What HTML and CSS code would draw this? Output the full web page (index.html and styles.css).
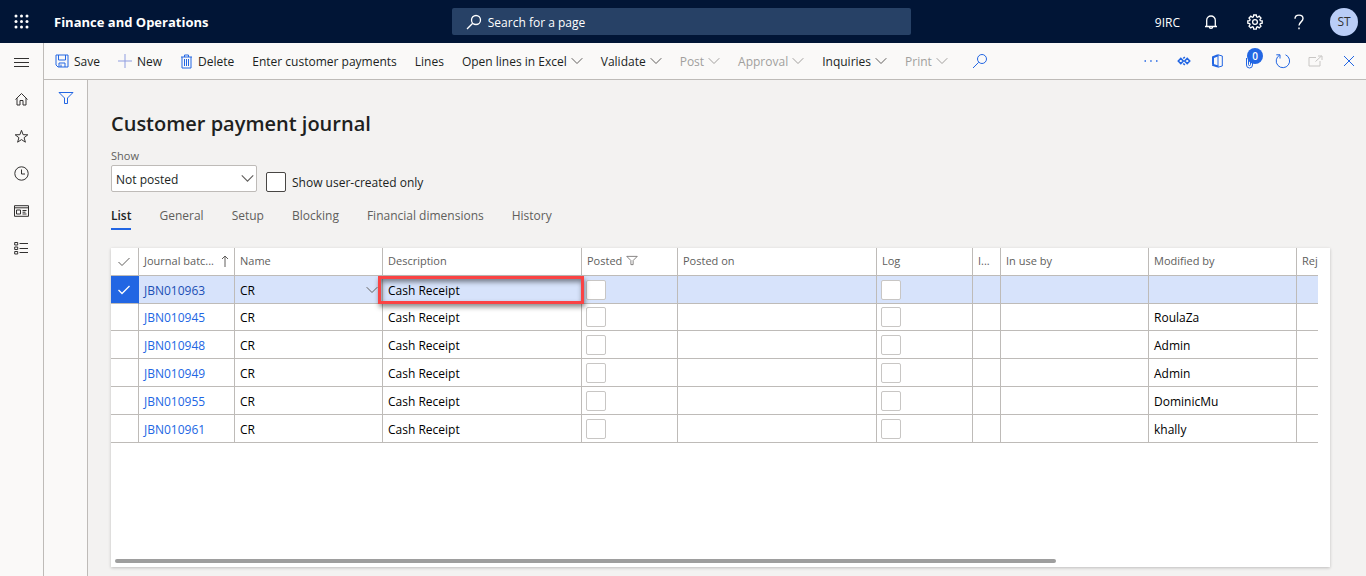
FILE: index.html
```html
<!DOCTYPE html>
<html lang="en">
<head>
<meta charset="utf-8">
<title>Customer payment journal</title>
<link rel="stylesheet" href="styles.css">
</head>
<body>
<svg class="sprite" aria-hidden="true">
  <symbol id="chevron" viewBox="0 0 12 8"><path d="M.7 1.200 6 6.500l5.300-5.300"/></symbol>
  <symbol id="search" viewBox="0 0 16 16"><circle cx="10" cy="6" r="4.500"/><path d="M6.700 9.300 1 15"/></symbol>
  <symbol id="check" viewBox="0 0 14 10"><path d="M1.500 5 5 8.500 12.500 1"/></symbol>
  <symbol id="funnel" viewBox="0 0 16 14"><path d="M1 1.500h14L9.500 7v5.500h-3V7z"/></symbol>
</svg>

<header class="top">
  <div class="brand">
    <button class="icon-btn waffle" aria-label="App launcher">
      <svg width="15" height="15" viewBox="0 0 15 15" fill="#fff" stroke="none"><g class="dots"><circle cx="2" cy="2" r="1.500"/><circle cx="7.500" cy="2" r="1.500"/><circle cx="13" cy="2" r="1.500"/><circle cx="2" cy="7.500" r="1.500"/><circle cx="7.500" cy="7.500" r="1.500"/><circle cx="13" cy="7.500" r="1.500"/><circle cx="2" cy="13" r="1.500"/><circle cx="7.500" cy="13" r="1.500"/><circle cx="13" cy="13" r="1.500"/></g></svg>
    </button>
    <span class="product">Finance and Operations</span>
  </div>
  <label class="search">
    <svg width="16" height="16" stroke-width="1.300"><use href="#search"/></svg>
    <input type="text" placeholder="Search for a page" aria-label="Search for a page">
  </label>
  <div class="account">
    <span class="company">9IRC</span>
    <button class="icon-btn" aria-label="Notifications">
      <svg width="14" height="16" viewBox="0 0 14 16" stroke-width="1.300"><path d="M1 12.500h12M2.700 12.500V6.300a4.300 4.300 0 0 1 8.600 0v6.200M5.300 12.700a1.700 1.700 0 0 0 3.400 0"/></svg>
    </button>
    <button class="icon-btn" aria-label="Settings">
      <svg width="16" height="16" viewBox="0 0 16 16" stroke-width="1.300"><path d="M6.700 1h2.600l.3 1.900 1 .4 1.600-1.100 1.800 1.800-1.100 1.600.4 1 1.900.3v2.300l-1.900.3-.4 1 1.100 1.600-1.800 1.800-1.600-1.100-1 .4-.3 1.900H6.700l-.3-1.900-1-.4-1.600 1.100L2 12.100l1.100-1.600-.4-1L.8 9.200V6.900l1.900-.3.4-1L2 4l1.800-1.800 1.600 1.100 1-.4z"/><circle cx="8" cy="8" r="2.400"/></svg>
    </button>
    <button class="icon-btn" aria-label="Help">
      <svg width="12" height="16" viewBox="0 0 12 16" stroke-width="1.400"><path d="M2 4.800C2 2.500 3.700 1.100 6 1.100s4 1.400 4 3.500c0 3.200-4 3.400-4 7M6 13.600v1.600"/></svg>
    </button>
    <button class="avatar" aria-label="Account manager">ST</button>
  </div>
</header>

<div class="shell">
  <nav class="rail" aria-label="Navigation">
    <button class="icon-btn" aria-label="Expand navigation"><svg width="15" height="12" viewBox="0 0 15 12"><path d="M0 1.500h15M0 5.500h15M0 9.500h15"/></svg></button>
    <button class="icon-btn" aria-label="Home"><svg width="15" height="15" viewBox="0 0 15 15"><path d="M1.500 7.500 7.500 1.500l6 6M3 6.200v6.800h3V8.500h3v4.500h3V6.200"/></svg></button>
    <button class="icon-btn" aria-label="Favorites"><svg width="15" height="15" viewBox="0 0 15 15"><path d="M7.500 1.300 9.100 5.700l4.700.1-3.700 2.900 1.300 4.500-3.900-2.600-3.900 2.600 1.300-4.500L1.200 5.800l4.700-.1z"/></svg></button>
    <button class="icon-btn" aria-label="Recent"><svg width="15" height="15" viewBox="0 0 15 15"><circle cx="7.500" cy="7.500" r="6.700"/><path d="M7.500 3.500v4.500H11"/></svg></button>
    <button class="icon-btn" aria-label="Workspaces"><svg width="15" height="12" viewBox="0 0 15 12"><path d="M.5.700h14v10.600H.5zM.5 2.800h14M2.500 5h4v4h-4zM8.500 5.500h4M8.500 7.200h3M8.500 9h4"/></svg></button>
    <button class="icon-btn" aria-label="Modules"><svg width="15" height="14" viewBox="0 0 15 14"><path d="M.7 1.500h3v2.500h-3zM.7 6h3v2.500h-3zM.7 10.500h3v2.500h-3zM5.500 2.500H14M5.500 7.500H14M5.500 11.500H14"/></svg></button>
  </nav>

  <div class="work">
    <div class="toolbar" role="toolbar">
      <button class="cmd with-icon"><svg width="14" height="14" viewBox="0 0 14 14"><path d="M1 1h12v12H3L1 11zM3.500 1v5h7V1M4 13V9h6v4M6 10.500V13"/></svg>Save</button>
      <button class="cmd with-icon"><svg class="pale" width="14" height="14" viewBox="0 0 14 14"><path d="M7 0v14M0 7h14"/></svg>New</button>
      <button class="cmd with-icon"><svg width="13" height="15" viewBox="0 0 13 15"><path d="M1 3h11M4.500 3V1h4v2M2 3v11h9V3M4.500 5v7M6.500 5v7M8.500 5v7"/></svg>Delete</button>
      <button class="cmd">Enter customer payments</button>
      <button class="cmd">Lines</button>
      <button class="cmd">Open lines in Excel<svg class="chev" width="12" height="8"><use href="#chevron"/></svg></button>
      <button class="cmd">Validate<svg class="chev" width="12" height="8"><use href="#chevron"/></svg></button>
      <button class="cmd" disabled>Post<svg class="chev" width="12" height="8"><use href="#chevron"/></svg></button>
      <button class="cmd" disabled>Approval<svg class="chev" width="12" height="8"><use href="#chevron"/></svg></button>
      <button class="cmd">Inquiries<svg class="chev" width="12" height="8"><use href="#chevron"/></svg></button>
      <button class="cmd" disabled>Print<svg class="chev" width="12" height="8"><use href="#chevron"/></svg></button>
      <button class="cmd find" aria-label="Search actions"><svg width="16" height="16"><use href="#search"/></svg></button>
      <div class="tools">
        <button class="icon-btn" aria-label="More"><svg width="14" height="4" viewBox="0 0 14 4"><path d="M.5 2H2M6.200 2h1.500M12 2h1.500" stroke-width="1.500"/></svg></button>
        <button class="icon-btn" aria-label="Power Apps"><svg width="14" height="10" viewBox="0 0 14 10" stroke-width="1.600"><path d="M1.300 5 3.800 2.500 6.300 5 3.800 7.500zM6.300 2.500 7.800 1M6.300 7.500 7.800 9M7.700 5l2.500-2.500L12.700 5l-2.500 2.500z"/></svg></button>
        <button class="icon-btn" aria-label="Open in Microsoft Office"><svg width="12" height="14" viewBox="0 0 12 14"><path d="M7 .8 11.300 2v10L7 13.200z"/><path d="M7 1.300 2 3.300v7.200M1.300 10.700 7 12.500" stroke-width="2"/></svg></button>
        <button class="icon-btn clip" aria-label="Attachments"><svg width="10" height="15" viewBox="0 0 10 15"><path d="M1.500 4v7a3 3 0 0 0 6 0V3a2 2 0 0 0-4 0v7.500a1 1 0 0 0 2 0V4"/></svg><span class="badge">0</span></button>
        <button class="icon-btn" aria-label="Refresh"><svg width="16" height="16" viewBox="0 0 16 16"><path d="M10.500 1.800a6.700 6.700 0 1 1-5.800.3M5 5.500V1.800H1.300"/></svg></button>
        <button class="icon-btn" aria-label="Open in new window" disabled><svg width="15" height="12" viewBox="0 0 15 12"><path d="M8 2.500H1v8.500h11V6M7.500 6.500l6-5.500M10 1h4v4"/></svg></button>
        <button class="icon-btn" aria-label="Close"><svg width="12" height="12" viewBox="0 0 12 12"><path d="m1 1 10 10M11 1 1 11"/></svg></button>
      </div>
    </div>

    <div class="panes">
      <aside class="filter-pane">
        <button class="icon-btn" aria-label="Show filters"><svg width="16" height="14"><use href="#funnel"/></svg></button>
      </aside>

      <main class="page">
        <h1>Customer payment journal</h1>
        <div class="filters">
          <div class="field">
            <label for="show">Show</label>
            <div class="select-box">
              <select id="show"><option>Not posted</option></select>
              <svg width="13" height="9"><use href="#chevron"/></svg>
            </div>
          </div>
          <label class="own"><input type="checkbox"><span>Show user-created only</span></label>
        </div>

        <div class="tabs" role="tablist">
          <button role="tab" class="tab active" aria-selected="true">List</button>
          <button role="tab" class="tab">General</button>
          <button role="tab" class="tab">Setup</button>
          <button role="tab" class="tab">Blocking</button>
          <button role="tab" class="tab">Financial dimensions</button>
          <button role="tab" class="tab">History</button>
        </div>

        <section class="card">
          <div class="grid-clip">
            <table class="grid">
              <colgroup><col class="c-mark"><col class="c-small"><col class="c-mid"><col class="c-wide"><col class="c-small"><col class="c-wide"><col class="c-small"><col class="c-mark"><col class="c-mid"><col class="c-mid"><col class="c-mid"></colgroup>
              <thead>
                <tr>
                  <th class="mark"><svg width="14" height="10"><use href="#check"/></svg></th>
                  <th><div class="head spread">Journal batc...<svg width="8" height="12" viewBox="0 0 8 12"><path d="M4 1v11M1 4l3-3 3 3"/></svg></div></th>
                  <th>Name</th>
                  <th>Description</th>
                  <th><div class="head">Posted<svg width="12" height="11"><use href="#funnel"/></svg></div></th>
                  <th>Posted on</th>
                  <th>Log</th>
                  <th>I...</th>
                  <th>In use by</th>
                  <th>Modified by</th>
                  <th>Reje</th>
                </tr>
              </thead>
              <tbody>
                <tr class="selected">
                  <td class="mark"><svg width="14" height="10" stroke-width="1.300"><use href="#check"/></svg></td>
                  <td><a href="#">JBN010963</a></td>
                  <td><div class="lookup">CR<button aria-label="Open lookup"><svg width="12" height="8"><use href="#chevron"/></svg></button></div></td>
                  <td class="marked">Cash Receipt</td>
                  <td class="tick"><input type="checkbox" aria-label="Posted"></td><td></td>
                  <td class="tick"><input type="checkbox" aria-label="Log"></td><td></td><td></td><td></td><td></td>
                </tr>
                <tr>
                  <td></td><td><a href="#">JBN010945</a></td><td>CR</td><td>Cash Receipt</td>
                  <td class="tick"><input type="checkbox" aria-label="Posted"></td><td></td>
                  <td class="tick"><input type="checkbox" aria-label="Log"></td><td></td><td></td><td>RoulaZa</td><td></td>
                </tr>
                <tr>
                  <td></td><td><a href="#">JBN010948</a></td><td>CR</td><td>Cash Receipt</td>
                  <td class="tick"><input type="checkbox" aria-label="Posted"></td><td></td>
                  <td class="tick"><input type="checkbox" aria-label="Log"></td><td></td><td></td><td>Admin</td><td></td>
                </tr>
                <tr>
                  <td></td><td><a href="#">JBN010949</a></td><td>CR</td><td>Cash Receipt</td>
                  <td class="tick"><input type="checkbox" aria-label="Posted"></td><td></td>
                  <td class="tick"><input type="checkbox" aria-label="Log"></td><td></td><td></td><td>Admin</td><td></td>
                </tr>
                <tr>
                  <td></td><td><a href="#">JBN010955</a></td><td>CR</td><td>Cash Receipt</td>
                  <td class="tick"><input type="checkbox" aria-label="Posted"></td><td></td>
                  <td class="tick"><input type="checkbox" aria-label="Log"></td><td></td><td></td><td>DominicMu</td><td></td>
                </tr>
                <tr>
                  <td></td><td><a href="#">JBN010961</a></td><td>CR</td><td>Cash Receipt</td>
                  <td class="tick"><input type="checkbox" aria-label="Posted"></td><td></td>
                  <td class="tick"><input type="checkbox" aria-label="Log"></td><td></td><td></td><td>khally</td><td></td>
                </tr>
              </tbody>
            </table>
          </div>
          <div class="track"><div class="thumb"></div></div>
        </section>
      </main>
    </div>
  </div>
</div>
</body>
</html>
```
FILE: styles.css
```css
* { box-sizing: border-box; }
html, body { height: 100%; }
body {
  margin: 0;
  display: flex;
  flex-direction: column;
  background: #f3f2f1;
  color: #201f1e;
  font: 12px/20px "Open Sans", "Noto Sans", sans-serif;
}
button, input, select { font: inherit; color: inherit; }
button { border: 0; padding: 0; background: none; display: flex; align-items: center; }
svg { fill: none; stroke: currentColor; flex: none; display: block; }
.dots { fill: #fff; stroke: none; }
.sprite { position: absolute; width: 0; height: 0; }
.icon-btn { justify-content: center; }

/* Header */
.top {
  display: grid;
  grid-template-columns: 1fr 34% 1fr;
  align-items: center;
  height: 43px;
  flex: none;
  background: #011536;
  color: #fff;
}
.brand { display: flex; align-items: center; }
.waffle { width: 43px; height: 43px; }
.product { margin-left: 11px; font-size: 13px; font-weight: 700; }
.search {
  display: flex;
  align-items: center;
  gap: 6px;
  height: 27px;
  margin: 0 4px 0 1px;
  padding-left: 14px;
  border-radius: 2px;
  background: #274166;
}
.search input { flex: 1; border: 0; padding: 2px 0 0; background: none; outline: 0; }
.search input::placeholder { color: #fff; opacity: 1; }
.account { display: flex; align-items: center; justify-content: flex-end; padding-right: 8px; }
.account .icon-btn { width: 44px; height: 43px; }
.company { margin-right: 9px; padding-top: 2px; }
.avatar {
  justify-content: center;
  width: 28px;
  height: 28px;
  margin-left: 9px;
  border-radius: 50%;
  background: #b9cdf7;
  color: #323130;
}

/* Frame */
.shell { flex: 1; display: flex; min-height: 0; }
.rail {
  display: flex;
  flex-direction: column;
  width: 44px;
  flex: none;
  padding-top: 1px;
  border-right: 1px solid #bebbb8;
  background: #faf9f8;
  color: #323130;
}
.rail .icon-btn { height: 37px; }
.work { flex: 1; display: flex; flex-direction: column; min-width: 0; }
.toolbar {
  display: flex;
  align-items: center;
  gap: 18px;
  height: 37px;
  flex: none;
  padding: 0 10px 0 11px;
  border-bottom: 1px solid #bebbb8;
  background: #faf9f8;
}
.cmd { gap: 4px; height: 36px; padding-top: 2px; white-space: nowrap; }
.with-icon { gap: 5px; }
.cmd svg { margin-bottom: 2px; color: #2266e3; }
.cmd .pale { color: #8f9de0; }
.cmd .chev { color: #605e5c; }
.cmd:disabled, .cmd:disabled .chev { color: #a19f9d; }
.find { margin-left: 6px; }
.tools { display: flex; gap: 18px; margin-left: auto; color: #2266e3; }
.tools .icon-btn { width: 15px; height: 36px; }
.tools .icon-btn:disabled { color: #c8c6c4; }
.clip { position: relative; }
.badge {
  position: absolute;
  left: 5px;
  top: 5px;
  width: 16px;
  height: 16px;
  border-radius: 50%;
  background: #2266e3;
  color: #fff;
  font-size: 10px;
  font-weight: 600;
  line-height: 16px;
}
.panes { flex: 1; display: flex; min-height: 0; }
.filter-pane {
  width: 44px;
  flex: none;
  border-right: 1px solid #bebbb8;
  background: #faf9f8;
  color: #2266e3;
}
.filter-pane .icon-btn { width: 43px; height: 36px; }

/* Page */
.page {
  flex: 1;
  display: flex;
  flex-direction: column;
  min-width: 0;
  padding: 28px 36px 9px 23px;
}
h1 { margin: 0; font-size: 20px; line-height: 32px; font-weight: 600; }
.filters { display: flex; align-items: flex-end; gap: 9px; margin-top: 7px; }
.field { width: 146px; }
.field label { display: block; padding-bottom: 1px; font-size: 11px; line-height: 17px; color: #605e5c; }
.select-box { display: grid; align-items: center; }
.select-box > * { grid-area: 1 / 1; }
.select-box svg { justify-self: end; margin-right: 3px; pointer-events: none; color: #605e5c; }
select {
  appearance: none;
  width: 100%;
  height: 27px;
  padding: 2px 20px 0 4px;
  border: 1px solid #bebbb8;
  border-radius: 2px;
  background: #fff;
}
input[type="checkbox"] {
  appearance: none;
  display: block;
  width: 20px;
  height: 20px;
  margin: 0;
  border: 1px solid #c8c6c4;
  border-radius: 2px;
  background: #fff;
}
.own { display: flex; align-items: flex-end; gap: 6px; }
.own span { line-height: 18px; }
.own input[type="checkbox"] { border-color: #484644; }
.tabs { display: flex; gap: 28px; margin-top: 13px; }
.tab { height: 25px; padding-bottom: 1px; border-bottom: 2px solid transparent; color: #605e5c; }
.tab.active { border-color: #2266e3; color: #201f1e; font-weight: 600; }

/* Journal grid */
.card {
  flex: 1;
  display: flex;
  flex-direction: column;
  margin-top: 18px;
  background: #fff;
  box-shadow: 0 1px 3px rgba(0, 0, 0, .22);
}
.grid-clip { margin-right: 12px; overflow: hidden; }
.grid { table-layout: fixed; width: 1334px; border-spacing: 0; color: #000; }
.c-mark { width: 28px; }
.c-small { width: 96px; }
.c-mid { width: 148px; }
.c-wide { width: 199px; }
th, td {
  height: 28px;
  padding: 2px 4px 0 5px;
  border: solid #bebbb8;
  border-width: 0 1px 1px 0;
  text-align: left;
  white-space: nowrap;
}
th { padding: 0 4px 2px 5px; font-size: 11px; font-weight: 400; color: #605e5c; }
td.mark, th.mark { padding: 0 6px; }
td.tick { padding: 0 4px; }
.head { display: flex; align-items: center; gap: 4px; }
.spread { justify-content: space-between; padding-right: 1px; }
a { color: #2266e3; text-decoration: none; }
.selected td { background: #d7e3fb; }
.selected + tr td { height: 27px; }
.selected a { color: #1b4fb5; }
.selected td.mark { background: #2266e3; border-right-color: #2266e3; color: #fff; }
.lookup { display: flex; align-items: center; justify-content: space-between; }
.lookup button { padding-bottom: 2px; color: #605e5c; }
.marked { position: relative; }
.marked::after {
  content: "";
  position: absolute;
  inset: 0 -3px -1px -5px;
  border: 3px solid #fa4344;
  box-shadow: 1px 3px 5px rgba(0, 0, 0, .45), inset 1px 3px 5px rgba(0, 0, 0, .45);
}
.track { margin: auto 8px 4px 4px; }
.thumb { width: 78%; height: 4px; border-radius: 2px; background: #9e9e9e; }
```
